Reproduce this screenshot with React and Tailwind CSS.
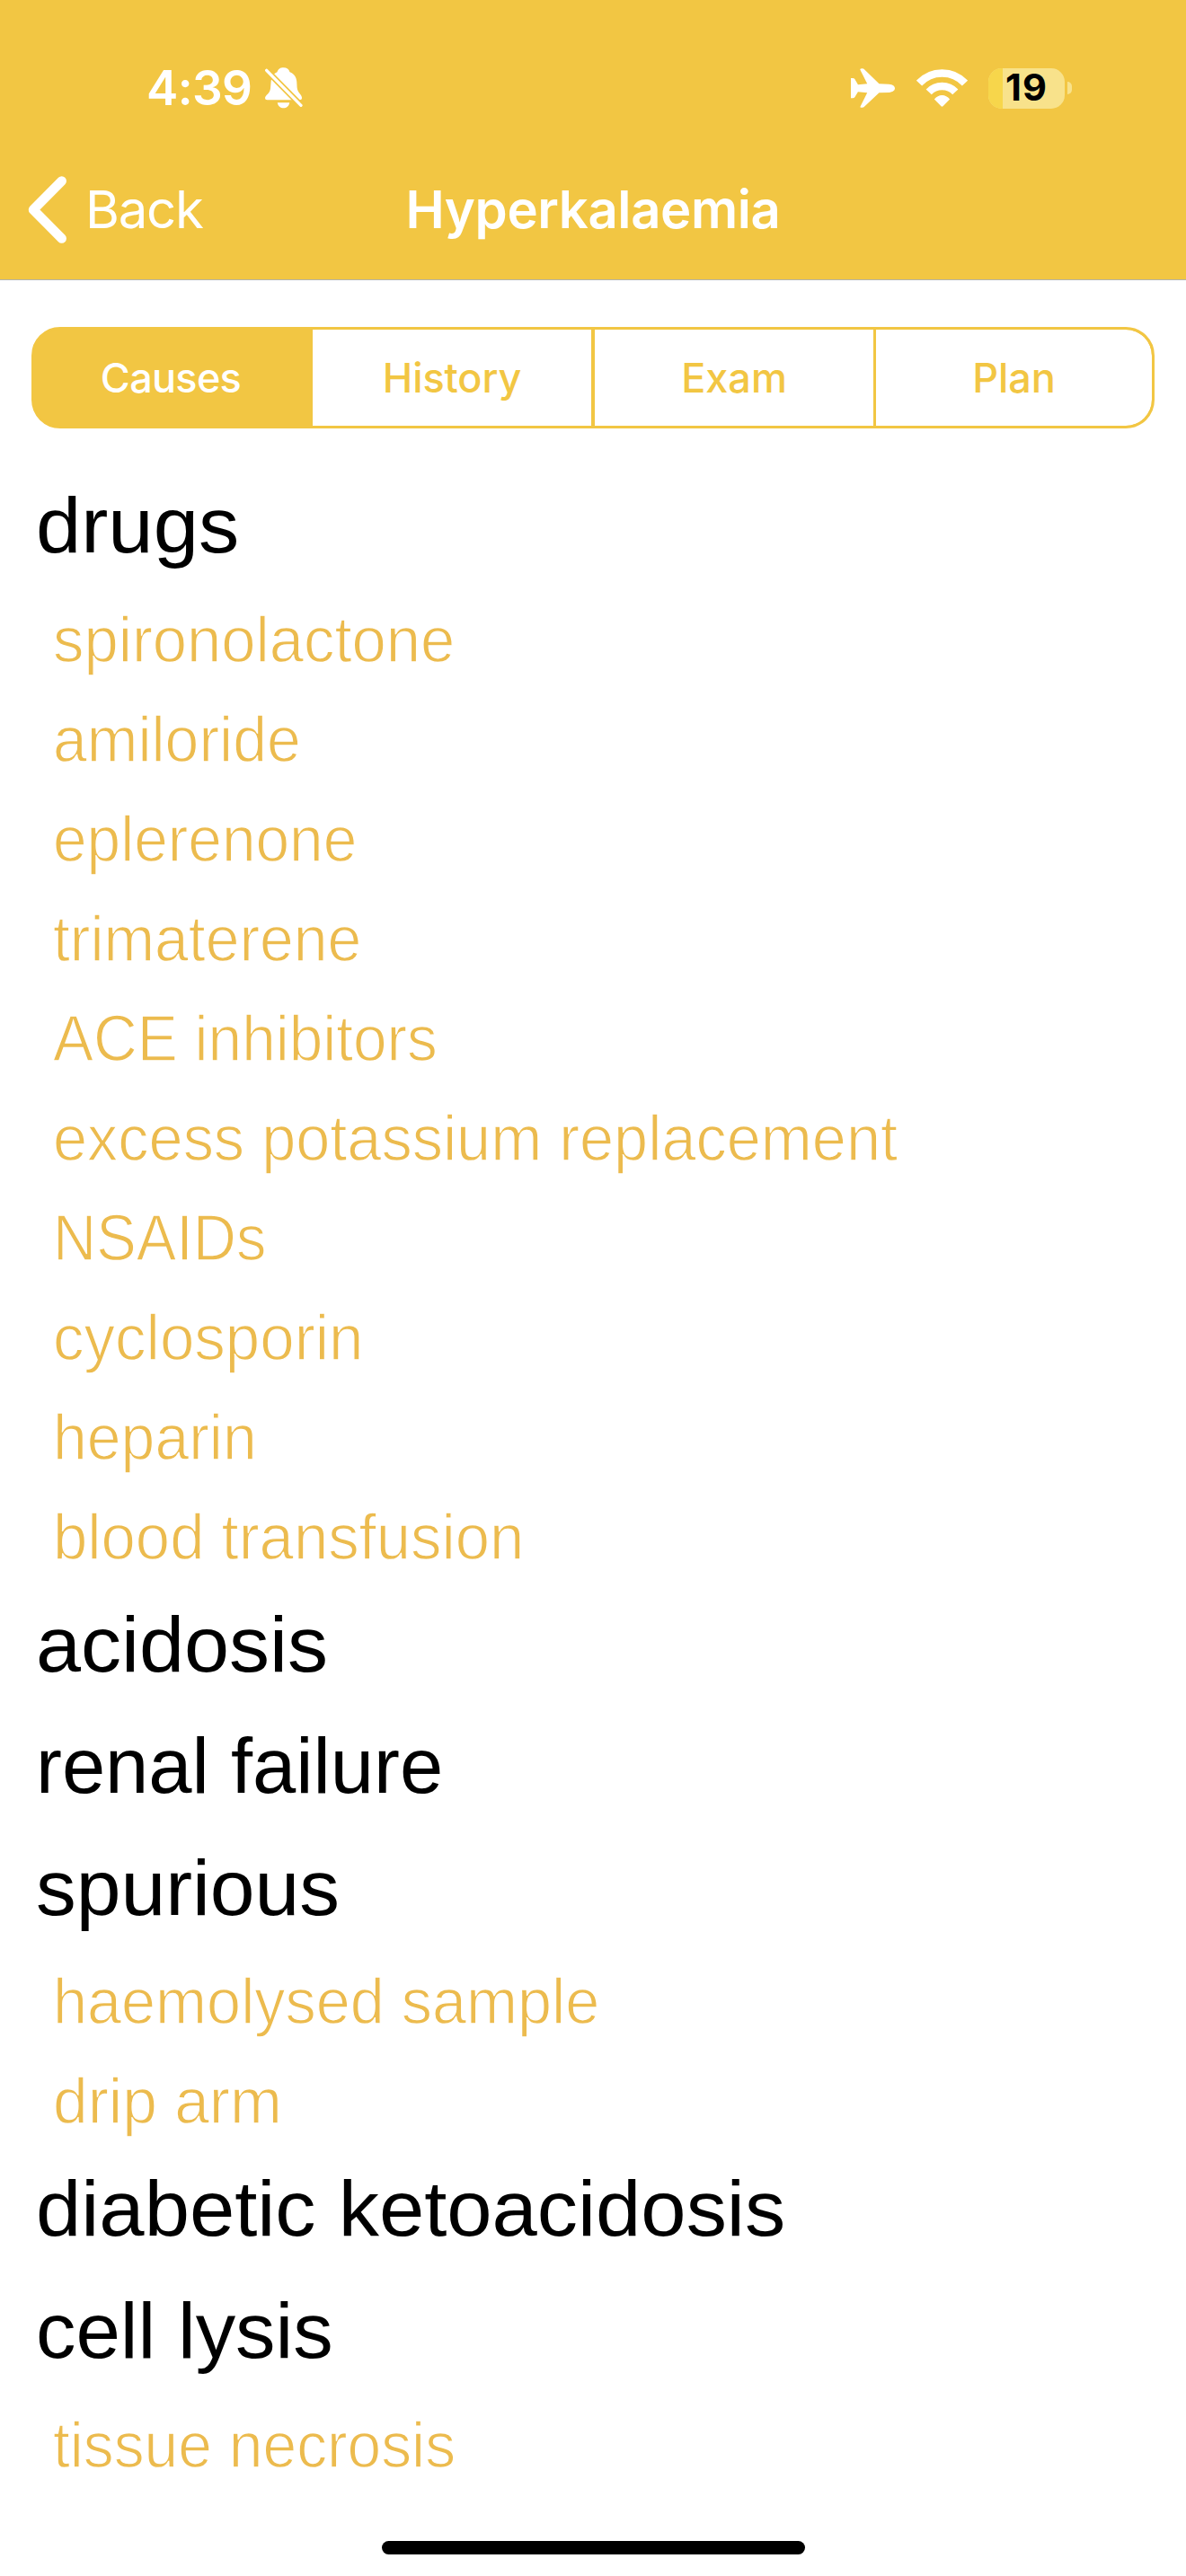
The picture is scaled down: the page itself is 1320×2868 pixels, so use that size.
const tabs = [
  { label: "Causes", cls: "w-[310px] bg-[#f2c643] text-white pr-[6px] tracking-[-0.7px]" },
  { label: "History", cls: "w-[314px] border-r-[4px] tracking-[-0.1px]" },
  { label: "Exam", cls: "w-[313px] border-r-[3px]" },
  { label: "Plan", cls: "flex-1 tracking-[-0.1px]" },
];

const causes = [
  { title: "drugs", fit: "scale-x-[1.039]", items: [
    ["spironolactone", "scale-x-[0.942]"],
    ["amiloride", "scale-x-[0.931]"],
    ["eplerenone", "scale-x-[0.926]"],
    ["trimaterene", "scale-x-[0.930]"],
    ["ACE inhibitors", "scale-x-[0.925]"],
    ["excess potassium replacement", "scale-x-[0.938]"],
    ["NSAIDs", "scale-x-[0.914]"],
    ["cyclosporin", "scale-x-[0.946]"],
    ["heparin", "scale-x-[0.931]"],
    ["blood transfusion", "scale-x-[0.943]"],
  ] },
  { title: "acidosis", fit: "scale-x-[1.034]", items: [] },
  { title: "renal failure", fit: "scale-x-[0.997]", items: [] },
  { title: "spurious", fit: "scale-x-[1.028]", items: [
    ["haemolysed sample", "scale-x-[0.937]"],
    ["drip arm", "scale-x-[0.952]"],
  ] },
  { title: "diabetic ketoacidosis", fit: "scale-x-[1.039]", items: [] },
  { title: "cell lysis", fit: "scale-x-[1.021]", items: [
    ["tissue necrosis", "scale-x-[0.928]"],
  ] },
];

function SilentBell() {
  return (
    <svg className="ml-[15px] h-[46px] w-[42px]" viewBox="0 0 125 137">
      <path fill="#fff" d="M0 102 C0 92 17 88 18 68 L20 44 C22 30 28 21 40 16 C44 5 50 1 61 1 C72 1 79 6 82 16 C97 22 104 34 105 48 L106 66 C107 84 121 88 122 100 Q123 108 115 108 H7 Q0 108 0 102Z" />
      <path fill="#fff" d="M41 117 H81 C79 129 71 135 61 135 C51 135 43 129 41 117Z" />
      <path stroke="#f2c643" strokeWidth="20" d="M-4 1 L128 135" />
      <path stroke="#fff" strokeWidth="10" strokeLinecap="round" d="M5 10 L119 126" />
    </svg>
  );
}

function Airplane() {
  return (
    <svg className="h-[44px] w-[49px]" viewBox="0 0 148 132">
      <path fill="#fff" d="M31 4 Q31 0 38 0 Q43 0 46 4 L95 52 L128 53 C141 54 148 60 148 67 C148 74 141 80 128 81 L95 82 L46 128 Q43 132 38 132 H33 Q31 131 32 128 L55 82 L24 79 L13 97 Q11 100 6 100 H0 V33 H6 Q11 33 13 36 L24 55 L55 52Z" />
    </svg>
  );
}

function Wifi() {
  return (
    <svg className="ml-[24px] h-[42px] w-[57px]" viewBox="0 0 172 126">
      <g fill="none" stroke="#fff" strokeWidth="25.5">
        <path d="M9.2 46.4 A105 105 0 0 1 162.8 46.4" />
        <path d="M41.4 76.4 A61 61 0 0 1 130.6 76.4" />
      </g>
      <path fill="#fff" d="M60 101 Q71 87 86 87 Q101 87 112 101 L89 124 Q86 127 83 124Z" />
    </svg>
  );
}

function Battery() {
  return (
    <div className="ml-[23px] flex items-center">
      <div className="flex h-[45px] w-[85px] items-center rounded-[15px] bg-[#f8e28b]">
        <div className="h-[45px] w-[16px] rounded-l-[15px] bg-[#f7d64b]" />
        <span className="ml-[3px] pb-[3px] text-[41.5px] leading-[42px] font-bold tracking-[1px] text-black">19</span>
      </div>
      <div className="ml-[3px] h-[14px] w-[5px] rounded-r-full bg-[#f8e28b]" />
    </div>
  );
}

export default function App() {
  return (
    <div className="h-[2868px] w-[1320px] overflow-hidden bg-white font-['Inter',sans-serif]">
      <header className="h-[312px] border-b border-[#b3b3ae] bg-[#f2c643] pt-[67px] text-white">
        <div className="flex h-[62px] items-center justify-between pr-[127px] pl-[163px]">
          <div className="flex items-center">
            <span className="text-[53px] leading-[62px] font-semibold tracking-[-0.6px]">4:39</span>
            <SilentBell />
          </div>
          <div className="flex items-center">
            <Airplane />
            <Wifi />
            <Battery />
          </div>
        </div>
        <nav className="mt-[26px] grid h-[156px] grid-cols-[1fr_auto_1fr] items-center text-[58px] leading-[70px]">
          <button className="flex items-center pl-[30px]">
            <svg className="h-[78px] w-[46px]" viewBox="0 0 46 78">
              <path d="M38.7 7.5 L7 39.5 L38.7 71.5" fill="none" stroke="#fff" strokeWidth="10.5" strokeLinecap="round" strokeLinejoin="round" />
            </svg>
            <span className="ml-[19px] tracking-[-1.2px]">Back</span>
          </button>
          <h1 className="font-semibold tracking-[-0.4px]">Hyperkalaemia</h1>
        </nav>
      </header>

      <div className="mx-[35px] mt-[52px] flex h-[113px] overflow-hidden rounded-[32px] border-[3px] border-[#f2c643] bg-[#f2c643]">
        {tabs.map((t, i) => (
          <button
            key={t.label}
            className={`flex items-center justify-center border-[#f2c643] text-[45px] leading-[54px] font-[450] ${i ? "bg-white text-[#f2c643]" : ""} ${i === 3 ? "rounded-r-[29px]" : ""} ${t.cls}`}
          >
            {t.label}
          </button>
        ))}
      </div>

      <main className="mt-[44px] h-[2308px] font-['Liberation_Sans',Arial,sans-serif]">
        {causes.map((c) => (
          <section key={c.title}>
            <h2 className={`ml-[40px] h-[135.6px] w-max origin-left pb-[8px] text-[87px] leading-[127.6px] text-black ${c.fit}`}>{c.title}</h2>
            <ul className="pl-[59px]">
              {c.items.map(([name, fit]) => (
                <li key={name} className={`h-[111px] w-max origin-left text-[73px] leading-[109px] whitespace-nowrap text-[#ecbb4e] [-webkit-text-stroke:1.3px_white] ${fit}`}>
                  {name}
                </li>
              ))}
            </ul>
          </section>
        ))}
      </main>

      <div className="mx-auto h-[15px] w-[471px] rounded-full bg-black" />
    </div>
  );
}
